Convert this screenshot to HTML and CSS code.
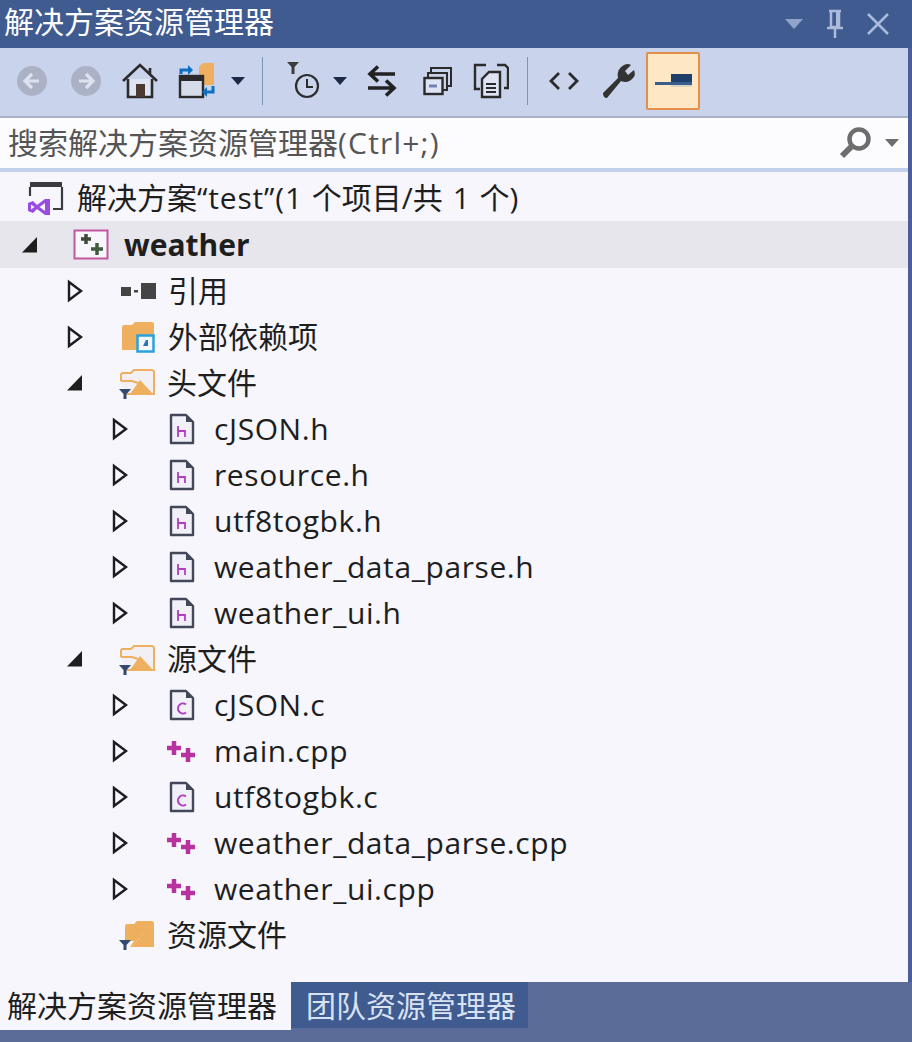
FILE: index.html
```html
<!DOCTYPE html>
<html lang="zh-CN">
<head>
<meta charset="utf-8">
<title>解决方案资源管理器</title>
<link rel="stylesheet" href="styles.css">
</head>
<body>
<svg class="defs" width="0" height="0">
  <defs>
    <symbol id="open" viewBox="0 0 18 24"><path d="M3 3 L15 12 L3 21 Z" fill="#f6f6fc" stroke="#1c1c24" stroke-width="2.4"/></symbol>
    <symbol id="down" viewBox="0 0 18 18"><path d="M1 16.500 L16 16.500 L16 1 Z" fill="#1e1e1e"/></symbol>
    <symbol id="hfile" viewBox="0 0 28 32"><path d="M3 2 H18 L25 9 V30 H3 Z" fill="#f1eff8" stroke="#43475a" stroke-width="2.400" stroke-linejoin="round"/><path d="M18 2 V9 H25 Z" fill="#43475a"/><path d="M10 13 V24 M10 18 H17 V24" fill="none" stroke="#b13ec0" stroke-width="1.800"/></symbol>
    <symbol id="cfile" viewBox="0 0 28 32"><path d="M3 2 H18 L25 9 V30 H3 Z" fill="#f1eff8" stroke="#43475a" stroke-width="2.400" stroke-linejoin="round"/><path d="M18 2 V9 H25 Z" fill="#43475a"/><path d="M18 15.500 A5 5 0 1 0 18 23.500" fill="none" stroke="#b13ec0" stroke-width="2"/></symbol>
    <symbol id="cpp" viewBox="0 0 32 24"><path d="M9 2 V16 M2 9 H16 M23 9 V23 M16 16 H30" fill="none" stroke="#b8329f" stroke-width="4.500"/></symbol>
    <symbol id="folderopen" viewBox="0 0 38 32"><path d="M3 14 V8 Q3 6 5 6 H13 L16 3 H33 Q36 3 36 5 V27 H8" fill="#f2f0f4" stroke="#eeb05e" stroke-width="2"/><path d="M3 14 H14 L20 16" fill="none" stroke="#eeb05e" stroke-width="2"/><path d="M12 27 L22 13 L35 27 Z" fill="#eeb05e"/><path d="M1 22 H13 L8.500 27 V32 H5.500 V27 Z" fill="#33496e"/></symbol>
    <symbol id="folder" viewBox="0 0 38 32"><path d="M7 8 Q7 5 9 5 L16 5 L19 2 H33 Q36 2 36 4 V28 H14 L25 15 H7 Z" fill="#eeb05e"/><path d="M7 15 H25 L14 28 H12 L16 22 H7 Z" fill="#eeb05e"/><path d="M1 21 H13 L8.500 26 V31 H5.500 V26 Z" fill="#33496e"/></symbol>
  </defs>
</svg>
<main class="panel">
  <header class="titlebar">
    <span class="title">解决方案资源管理器</span>
    <div class="winbtns">
      <svg class="ic" width="20" height="14" viewBox="0 0 20 14"><path d="M1 2 H19 L10 12 Z" fill="#8fa3cb"/></svg>
      <svg class="ic" width="20" height="30" viewBox="0 0 20 30"><path d="M4 2 H16 M6 2 V18 H14 V2 M2 19 H18 M10 19 V29" fill="none" stroke="#aabbdc" stroke-width="2.500"/><path d="M11 3 H14 V17 H11 Z" fill="#aabbdc"/></svg>
      <svg class="ic" width="24" height="24" viewBox="0 0 24 24"><path d="M2 2 L22 22 M22 2 L2 22" stroke="#aabbdc" stroke-width="2.500"/></svg>
    </div>
  </header>
  <nav class="toolbar">
    <svg class="tool back" width="30" height="30" viewBox="0 0 30 30"><circle cx="15" cy="15" r="15" fill="#acb2c5"/><path d="M22 15 H9 M15 8 L8 15 L15 22" fill="none" stroke="#dde2f1" stroke-width="3.200"/></svg>
    <svg class="tool fwd" width="30" height="30" viewBox="0 0 30 30"><circle cx="15" cy="15" r="15" fill="#acb2c5"/><path d="M8 15 H21 M15 8 L22 15 L15 22" fill="none" stroke="#dde2f1" stroke-width="3.200"/></svg>
    <svg class="tool home" width="36" height="36" viewBox="0 0 36 36"><path d="M1 18 L18 2 L35 18 M28 5 V12" fill="none" stroke="#2b2b2b" stroke-width="2.600"/><path d="M6 16 V34 H30 V16" fill="#dfe4f4" stroke="#2b2b2b" stroke-width="2.600"/><rect x="14" y="21" width="9" height="13" fill="#4b3a30"/></svg>
    <svg class="tool sync" width="38" height="36" viewBox="0 0 38 36"><path d="M21 4 L25 0 H36 V22 H21 Z" fill="#eeb05e"/><rect x="2" y="13" width="23" height="21" fill="#d6dbe9" stroke="#2b2b2b" stroke-width="2.400"/><rect x="2" y="13" width="23" height="5" fill="#2b2b2b"/><path d="M3 11 V7 H10" fill="none" stroke="#0d6fc2" stroke-width="3"/><path d="M10 2 L15 7 L10 12 Z" fill="#0d6fc2"/><path d="M35 23 V29 H29" fill="none" stroke="#0d6fc2" stroke-width="3"/><path d="M29 24 L24 29 L29 34 Z" fill="#0d6fc2"/></svg>
    <svg class="caret c1" width="14" height="8" viewBox="0 0 14 8"><path d="M0 0 H14 L7 8 Z" fill="#1c2a48"/></svg>
    <span class="sep s1"></span>
    <svg class="tool clock" width="34" height="38" viewBox="0 0 34 38"><path d="M0 0 H12 L7.500 5 V12 H4.500 V5 Z" fill="#3c3c3c"/><circle cx="20" cy="24" r="11" fill="none" stroke="#2b2b2b" stroke-width="2.200"/><path d="M20 17 V25 H26" fill="none" stroke="#2b2b2b" stroke-width="2"/></svg>
    <svg class="caret c2" width="14" height="8" viewBox="0 0 14 8"><path d="M0 0 H14 L7 8 Z" fill="#1c2a48"/></svg>
    <svg class="tool swap" width="30" height="32" viewBox="0 0 30 32"><path d="M28 9 H3 M11 1.500 L3 9 L11 16.500" fill="none" stroke="#222" stroke-width="3.600"/><path d="M1 23 H27 M19 15.500 L27 23 L19 30.500" fill="none" stroke="#222" stroke-width="3.600"/></svg>
    <svg class="tool collapse" width="30" height="30" viewBox="0 0 30 30"><path d="M8 7 V2 H28 V20 H23 M5 12 V7 H24 V24 H20" fill="none" stroke="#2b2b2b" stroke-width="2"/><rect x="1.500" y="12" width="18" height="16" fill="#dfe4f4" stroke="#2b2b2b" stroke-width="2.400"/><path d="M6 20 H14" stroke="#6f86b0" stroke-width="3"/></svg>
    <svg class="tool pages" width="36" height="36" viewBox="0 0 36 36"><path d="M7 26 H2 V2 H13 M24 2 H32 L35 5 V25 H31" fill="none" stroke="#2b2b2b" stroke-width="2.400"/><path d="M9 16 L16 9 H27 V34 H9 Z" fill="#dfe4f4" stroke="#2b2b2b" stroke-width="2.400"/><path d="M13 21 H23 M13 25 H23 M13 29 H23" stroke="#2b2b2b" stroke-width="2"/></svg>
    <span class="sep s2"></span>
    <svg class="tool code" width="30" height="20" viewBox="0 0 30 20"><path d="M10 2 L2 10 L10 18 M20 2 L28 10 L20 18" fill="none" stroke="#2b2b2b" stroke-width="2.800"/></svg>
    <svg class="tool wrench" width="36" height="36" viewBox="0 0 36 36"><path d="M2 30 L17 15 Q15 6 23 2 Q27 0 30 2 L24 8 L27 12 L33 7 Q35 12 32 15 Q27 21 20 18 L6 35 Q2 35 2 30 Z" fill="#333"/></svg>
    <button class="preview" type="button" aria-label="预览"><svg width="38" height="18" viewBox="0 0 38 18"><rect x="16" y="2" width="21" height="10" fill="#1d3f69"/><rect x="0" y="10" width="37" height="3" fill="#3a5d8e"/><rect x="16" y="13" width="21" height="2" fill="#d8d2c2"/></svg></button>
  </nav>
  <div class="search">
    <span class="placeholder">搜索解决方案资源管理器<span class="wide">(Ctrl+;)</span></span>
    <svg class="mag" width="34" height="34" viewBox="0 0 34 34"><circle cx="20" cy="13" r="9.500" fill="none" stroke="#6d6d6d" stroke-width="4.500"/><path d="M13 20 L3 30" stroke="#6d6d6d" stroke-width="6"/></svg>
    <svg class="searchcaret" width="14" height="8" viewBox="0 0 14 8"><path d="M0 0 H14 L7 8 Z" fill="#6d6d6d"/></svg>
  </div>
  <div class="strip"></div>
  <ul class="tree">
    <li class="row root">
      <svg class="slnicon" width="38" height="36" viewBox="0 0 38 36"><path d="M3 2 H35 V7 H3 Z" fill="#3a3a3f"/><path d="M3 7 V16 M35 7 V29 H26" fill="none" stroke="#3a3a3f" stroke-width="2.200"/><path d="M1 23 L6 21 L10 25 L18 19 H23 V35 H18 L10 29 L6 33 L1 31 Z" fill="#9a4ce0"/><path d="M4 24.500 L7.500 27 L4 29.500 Z M18 23 V31 L12.500 27 Z" fill="#f6f6fc"/></svg>
      <span class="label sln">解决方案<span class="wide">“test”(</span>1 个项目/共 1 个)</span>
    </li>
    <li class="row project">
      <svg class="exp e0" width="18" height="18"><use href="#down"/></svg>
      <svg class="icon projicon" width="36" height="32" viewBox="0 0 36 32"><rect x="1.500" y="1.500" width="33" height="28" fill="#f6f6fc" stroke="#c2569f" stroke-width="2"/><path d="M13 5 V15 M8 10 H18" stroke="#3d4a3a" stroke-width="3.500"/><path d="M24 14 V26 M18 20 H30" stroke="#3f5c3c" stroke-width="3.500"/></svg>
      <span class="label bold">weather</span>
    </li>
    <li class="row l1">
      <svg class="exp" width="18" height="24"><use href="#open"/></svg>
      <svg class="icon ref" width="36" height="16" viewBox="0 0 36 16"><rect x="0" y="4" width="10" height="9" fill="#444"/><rect x="13" y="7" width="4" height="2.500" fill="#444"/><rect x="20" y="0" width="15" height="16" fill="#444"/></svg>
      <span class="label">引用</span>
    </li>
    <li class="row l1">
      <svg class="exp" width="18" height="24"><use href="#open"/></svg>
      <svg class="icon dep" width="34" height="32" viewBox="0 0 34 32"><path d="M1 6 Q1 4 3 4 H11 L14 1 H31 Q33 1 33 3 V15 H16 V29 H1 Z" fill="#eeb05e"/><rect x="16.500" y="14.500" width="16" height="16" fill="#f6f6fc" stroke="#2aa1dd" stroke-width="2.500"/><path d="M22 25 L25 19 H27 V25 Z" fill="#2573b8"/></svg>
      <span class="label">外部依赖项</span>
    </li>
    <li class="row l1">
      <svg class="exp e1" width="18" height="18"><use href="#down"/></svg>
      <svg class="icon ifolder" width="38" height="32"><use href="#folderopen"/></svg>
      <span class="label">头文件</span>
    </li>
    <li class="row l2"><svg class="exp" width="18" height="24"><use href="#open"/></svg><svg class="icon" width="28" height="32"><use href="#hfile"/></svg><span class="label code-name">cJSON.h</span></li>
    <li class="row l2"><svg class="exp" width="18" height="24"><use href="#open"/></svg><svg class="icon" width="28" height="32"><use href="#hfile"/></svg><span class="label code-name">resource.h</span></li>
    <li class="row l2"><svg class="exp" width="18" height="24"><use href="#open"/></svg><svg class="icon" width="28" height="32"><use href="#hfile"/></svg><span class="label code-name">utf8togbk.h</span></li>
    <li class="row l2"><svg class="exp" width="18" height="24"><use href="#open"/></svg><svg class="icon" width="28" height="32"><use href="#hfile"/></svg><span class="label code-name">weather_data_parse.h</span></li>
    <li class="row l2"><svg class="exp" width="18" height="24"><use href="#open"/></svg><svg class="icon" width="28" height="32"><use href="#hfile"/></svg><span class="label code-name">weather_ui.h</span></li>
    <li class="row l1">
      <svg class="exp e1" width="18" height="18"><use href="#down"/></svg>
      <svg class="icon ifolder" width="38" height="32"><use href="#folderopen"/></svg>
      <span class="label">源文件</span>
    </li>
    <li class="row l2"><svg class="exp" width="18" height="24"><use href="#open"/></svg><svg class="icon" width="28" height="32"><use href="#cfile"/></svg><span class="label code-name">cJSON.c</span></li>
    <li class="row l2"><svg class="exp" width="18" height="24"><use href="#open"/></svg><svg class="icon cppicon" width="32" height="24"><use href="#cpp"/></svg><span class="label code-name">main.cpp</span></li>
    <li class="row l2"><svg class="exp" width="18" height="24"><use href="#open"/></svg><svg class="icon" width="28" height="32"><use href="#cfile"/></svg><span class="label code-name">utf8togbk.c</span></li>
    <li class="row l2"><svg class="exp" width="18" height="24"><use href="#open"/></svg><svg class="icon cppicon" width="32" height="24"><use href="#cpp"/></svg><span class="label code-name">weather_data_parse.cpp</span></li>
    <li class="row l2"><svg class="exp" width="18" height="24"><use href="#open"/></svg><svg class="icon cppicon" width="32" height="24"><use href="#cpp"/></svg><span class="label code-name">weather_ui.cpp</span></li>
    <li class="row l1 nofold">
      <svg class="icon ifolder" width="38" height="32"><use href="#folder"/></svg>
      <span class="label">资源文件</span>
    </li>
  </ul>
  <footer class="tabs">
    <span class="tab active">解决方案资源管理器</span>
    <span class="tab other">团队资源管理器</span>
  </footer>
  <div class="bottom"></div>
</main>
</body>
</html>
```

FILE: styles.css
```css
* { box-sizing: border-box; }
html, body { margin: 0; padding: 0; }
body {
  width: 912px;
  height: 1042px;
  overflow: hidden;
  font-family: "Open Sans", "Noto Sans CJK SC", sans-serif;
  background: #4a5d9c;
}
.defs { position: absolute; }
svg { display: block; flex: none; }
.panel { display: flex; flex-direction: column; height: 1042px; }

.titlebar {
  height: 48px;
  flex: none;
  display: flex;
  align-items: center;
  justify-content: space-between;
  background: #3f5b90;
  padding: 0 22px 0 4px;
}
.title { color: #fff; font-size: 30px; line-height: 44px; padding-bottom: 4px; }
.winbtns { display: flex; align-items: center; gap: 21px; }

.toolbar {
  height: 70px;
  flex: none;
  display: flex;
  align-items: center;
  background: #c9d3ec;
  border-bottom: 2px solid #a9b1c8;
  padding: 0 0 2px 17px;
  margin-right: 4px;
}
.tool { margin-left: 0; }
.fwd { margin-left: 24px; }
.home { margin-left: 21px; }
.sync { margin-left: 20px; }
.c1 { margin-left: 15px; }
.sep { width: 1px; height: 48px; background: #7f93b4; flex: none; }
.s1 { margin-left: 17px; }
.clock { margin-left: 24px; }
.c2 { margin-left: 12px; }
.swap { margin-left: 20px; }
.collapse { margin-left: 26px; }
.pages { margin-left: 20px; }
.s2 { margin-left: 18px; }
.code { margin-left: 21px; }
.wrench { margin-left: 22px; }
.preview {
  margin: 0 0 0 9px;
  width: 54px;
  height: 58px;
  padding: 0 0 0 7px;
  display: flex;
  align-items: center;
  background: #fee7c4;
  border: 2px solid #e58e47;
  border-radius: 2px;
}

.search {
  height: 50px;
  flex: none;
  display: flex;
  align-items: center;
  background: #fcfbfe;
  padding-left: 8px;
  margin-right: 4px;
}
.placeholder { flex: 1; color: #555; font-size: 30px; line-height: 52px; white-space: nowrap; }
.placeholder .wide { letter-spacing: 1.2px; }
.searchcaret { margin: 0 9px 0 12px; }

.strip { height: 4px; flex: none; background: #c3d0ea; margin-right: 4px; }

.tree {
  list-style: none;
  margin: 0 4px 0 0;
  padding: 3px 0 0;
  flex: 1;
  background: #f6f6fc;
}
.row {
  height: 46px;
  display: flex;
  align-items: center;
  color: #1e1e1e;
  font-size: 30px;
}
.label { line-height: 46px; white-space: nowrap; }
.root { padding-left: 27px; gap: 12px; }
.sln { word-spacing: 2px; }
.sln .wide { letter-spacing: 0.8px; }
.project { height: 47px; background: #e6e6ec; padding-left: 21px; }
.e0 { margin-right: 34px; }
.bold { font-weight: 700; margin-left: 15px; font-size: 30px; }
.l1 { padding-left: 66px; }
.l1 .exp { margin-right: 37px; }
.l1 .e1 { margin-right: 34px; width: 18px; }
.l1 .icon { margin-right: 11px; }
.l1 .dep { margin-right: 13px; }
.nofold { padding-left: 118px; }
.l2 { padding-left: 111px; }
.l2 .exp { margin-right: 39px; }
.l2 .icon { margin-right: 18px; }
.l2 .cppicon { margin-right: 17px; margin-left: -3px; }
.code-name { letter-spacing: 0.6px; }

.tabs { height: 48px; flex: none; display: flex; background: #5b6c98; }
.tab { font-size: 30px; line-height: 48px; white-space: nowrap; }
.active { background: #f6f6fc; color: #1e1e1e; width: 291px; padding-left: 7px; }
.other { background: #3f5b90; color: #d8e2f2; width: 237px; margin-bottom: 2px; padding-left: 15px; }
.bottom { height: 12px; flex: none; background: #5b6c98; }
```
